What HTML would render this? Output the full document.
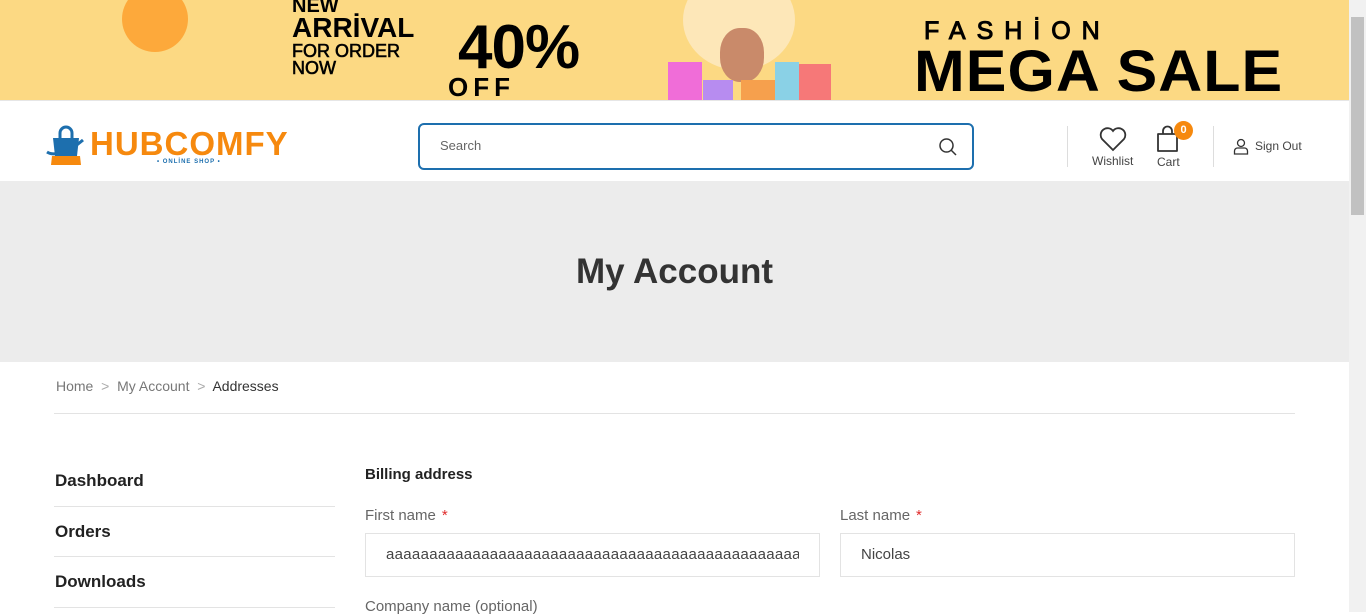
<!DOCTYPE html>
<html><head><meta charset="utf-8"><style>
*{margin:0;padding:0;box-sizing:border-box}
body{width:1366px;height:612px;overflow:hidden;position:relative;font-family:"Liberation Sans",sans-serif;background:#fff;color:#333}
.a{position:absolute}
.banner{left:0;top:0;width:1349px;height:100px;background:#fcd983;overflow:hidden}
.b{font-weight:bold;color:#000;white-space:nowrap}
.sb{left:1349px;top:0;width:17px;height:612px;background:#f1f1f1}
.thumb{left:1351px;top:17px;width:13px;height:198px;background:#c1c1c1}
.hero{left:0;top:181px;width:1349px;height:181px;background:#ececec}
.lbl{font-size:15px;color:#666}
.lbl i{color:#e02b2b;font-style:normal;margin-left:6px}
.inp{border:1px solid #e3e3e3;height:44px;font-size:15px;color:#444;padding:12px 20px;white-space:nowrap}
.inp span{display:block;overflow:hidden}
.nav{left:55px;width:280px;font-size:17px;font-weight:bold;color:#222}
.line{height:1px;background:#e3e3e3}
</style></head><body>
<div class="a banner">
  <div class="a" style="left:122px;top:-14px;width:66px;height:66px;border-radius:50%;background:#fda93b"></div>
  <div class="a" style="left:683px;top:-30px;width:112px;height:100px;border-radius:50%;background:#fde7b8"></div>
  <div class="a b" style="left:292px;top:-5px;font-size:20px">NEW</div>
  <div class="a b" style="left:292px;top:12px;font-size:28px">ARRİVAL</div>
  <div class="a b" style="left:292px;top:43px;font-size:18px;font-weight:normal;-webkit-text-stroke:.6px #000;line-height:17px">FOR ORDER<br>NOW</div>
  <div class="a b" style="left:458px;top:12px;font-size:62px;letter-spacing:-1px">40%</div>
  <div class="a b" style="left:448px;top:72px;font-size:26px;letter-spacing:5px">OFF</div>
  <div class="a" style="left:720px;top:28px;width:44px;height:54px;border-radius:45%;background:#c98a6a"></div>
  <div class="a" style="left:668px;top:62px;width:34px;height:38px;background:#f06dd8"></div>
  <div class="a" style="left:703px;top:80px;width:30px;height:20px;background:#b78cf0"></div>
  <div class="a" style="left:741px;top:80px;width:34px;height:20px;background:#f6a04d"></div>
  <div class="a" style="left:775px;top:62px;width:24px;height:38px;background:#8ad1e6"></div>
  <div class="a" style="left:799px;top:64px;width:32px;height:36px;background:#f67878"></div>
  <div class="a b" style="left:924px;top:17px;font-size:25px;letter-spacing:11px;font-weight:normal;-webkit-text-stroke:1px #000">FASHİON</div>
  <div class="a b" style="left:914px;top:38px;font-size:58px;letter-spacing:1px;transform:scaleX(1.05);transform-origin:left">MEGA SALE</div>
</div>
<div class="a" style="left:0;top:100px;width:1349px;height:1px;background:#e6e6e6"></div>
<svg class="a" style="left:45px;top:124px" width="46" height="42" viewBox="0 0 46 42">
  <path d="M8 14h26l-2 18H10z" fill="#1d6fae"/>
  <path d="M15 14v-5a6 6 0 0 1 12 0v5" fill="none" stroke="#1d6fae" stroke-width="3"/>
  <path d="M2 28c6 4 20 2 36-12" fill="none" stroke="#1d6fae" stroke-width="3"/>
  <path d="M7 32h28l1 9H6z" fill="#f6890e"/>
</svg>
<div class="a b" style="left:90px;top:125px;font-size:33px;color:#f6890e;letter-spacing:1px">HUBCOMFY</div>
<div class="a" style="left:157px;top:159px;font-size:6px;color:#1d6fae;font-weight:bold;letter-spacing:1px">• ONLİNE SHOP •</div>
<div class="a" style="left:418px;top:123px;width:556px;height:47px;border:2px solid #1d6fae;border-radius:6px"></div>
<div class="a" style="left:440px;top:138px;font-size:13px;color:#666">Search</div>
<svg class="a" style="left:938px;top:137px" width="20" height="20" viewBox="0 0 20 20"><circle cx="8.5" cy="8.5" r="6.5" fill="none" stroke="#333" stroke-width="1.5"/><path d="M13 13l5 5" stroke="#333" stroke-width="1.5"/></svg>
<div class="a" style="left:1067px;top:126px;width:1px;height:41px;background:#ddd"></div>
<svg class="a" style="left:1099px;top:126px" width="28" height="26" viewBox="0 0 28 26"><path d="M14 24L3 13a6.5 6.5 0 0 1 11-8 6.5 6.5 0 0 1 11 8z" fill="none" stroke="#333" stroke-width="1.8"/></svg>
<div class="a" style="left:1092px;top:154px;font-size:12px;color:#444">Wishlist</div>
<svg class="a" style="left:1155px;top:125px" width="30" height="28" viewBox="0 0 30 28"><path d="M3 9h19v17H3z" fill="none" stroke="#333" stroke-width="1.8" stroke-linejoin="round"/><path d="M8 9V6a4.5 4.5 0 0 1 9 0v3" fill="none" stroke="#333" stroke-width="1.8"/></svg>
<div class="a" style="left:1174px;top:121px;width:19px;height:19px;border-radius:50%;background:#f6890e;color:#fff;font-size:11px;font-weight:bold;text-align:center;line-height:19px">0</div>
<div class="a" style="left:1157px;top:155px;font-size:12px;color:#444">Cart</div>
<div class="a" style="left:1213px;top:126px;width:1px;height:41px;background:#ddd"></div>
<svg class="a" style="left:1233px;top:138px" width="16" height="17" viewBox="0 0 16 17"><circle cx="8" cy="5" r="3.5" fill="none" stroke="#333" stroke-width="1.3"/><path d="M1.5 16v-3a3 3 0 0 1 3-3h7a3 3 0 0 1 3 3v3z" fill="none" stroke="#333" stroke-width="1.3"/></svg>
<div class="a" style="left:1255px;top:139px;font-size:12px;color:#444">Sign Out</div>
<div class="a hero"></div>
<div class="a b" style="left:0;width:1349px;top:252px;text-align:center;font-size:35px;color:#333">My Account</div>
<div class="a" style="left:56px;top:378px;font-size:14px;color:#777">Home &nbsp;<span style="color:#aaa">&gt;</span>&nbsp; My Account &nbsp;<span style="color:#aaa">&gt;</span>&nbsp; <span style="color:#333">Addresses</span></div>
<div class="a line" style="left:54px;top:413px;width:1241px"></div>
<div class="a nav" style="top:471px">Dashboard</div>
<div class="a line" style="left:54px;top:506px;width:281px"></div>
<div class="a nav" style="top:522px">Orders</div>
<div class="a line" style="left:54px;top:556px;width:281px"></div>
<div class="a nav" style="top:572px">Downloads</div>
<div class="a line" style="left:54px;top:607px;width:281px"></div>
<div class="a b" style="left:365px;top:466px;font-size:15px;color:#222">Billing address</div>
<div class="a lbl" style="left:365px;top:507px">First name<i>*</i></div>
<div class="a inp" style="left:365px;top:533px;width:455px;letter-spacing:.3px"><span>aaaaaaaaaaaaaaaaaaaaaaaaaaaaaaaaaaaaaaaaaaaaaaaaaaaa</span></div>
<div class="a lbl" style="left:840px;top:507px">Last name<i>*</i></div>
<div class="a inp" style="left:840px;top:533px;width:455px">Nicolas</div>
<div class="a lbl" style="left:365px;top:598px">Company name (optional)</div>
<div class="a sb"></div><div class="a thumb"></div>
</body></html>
